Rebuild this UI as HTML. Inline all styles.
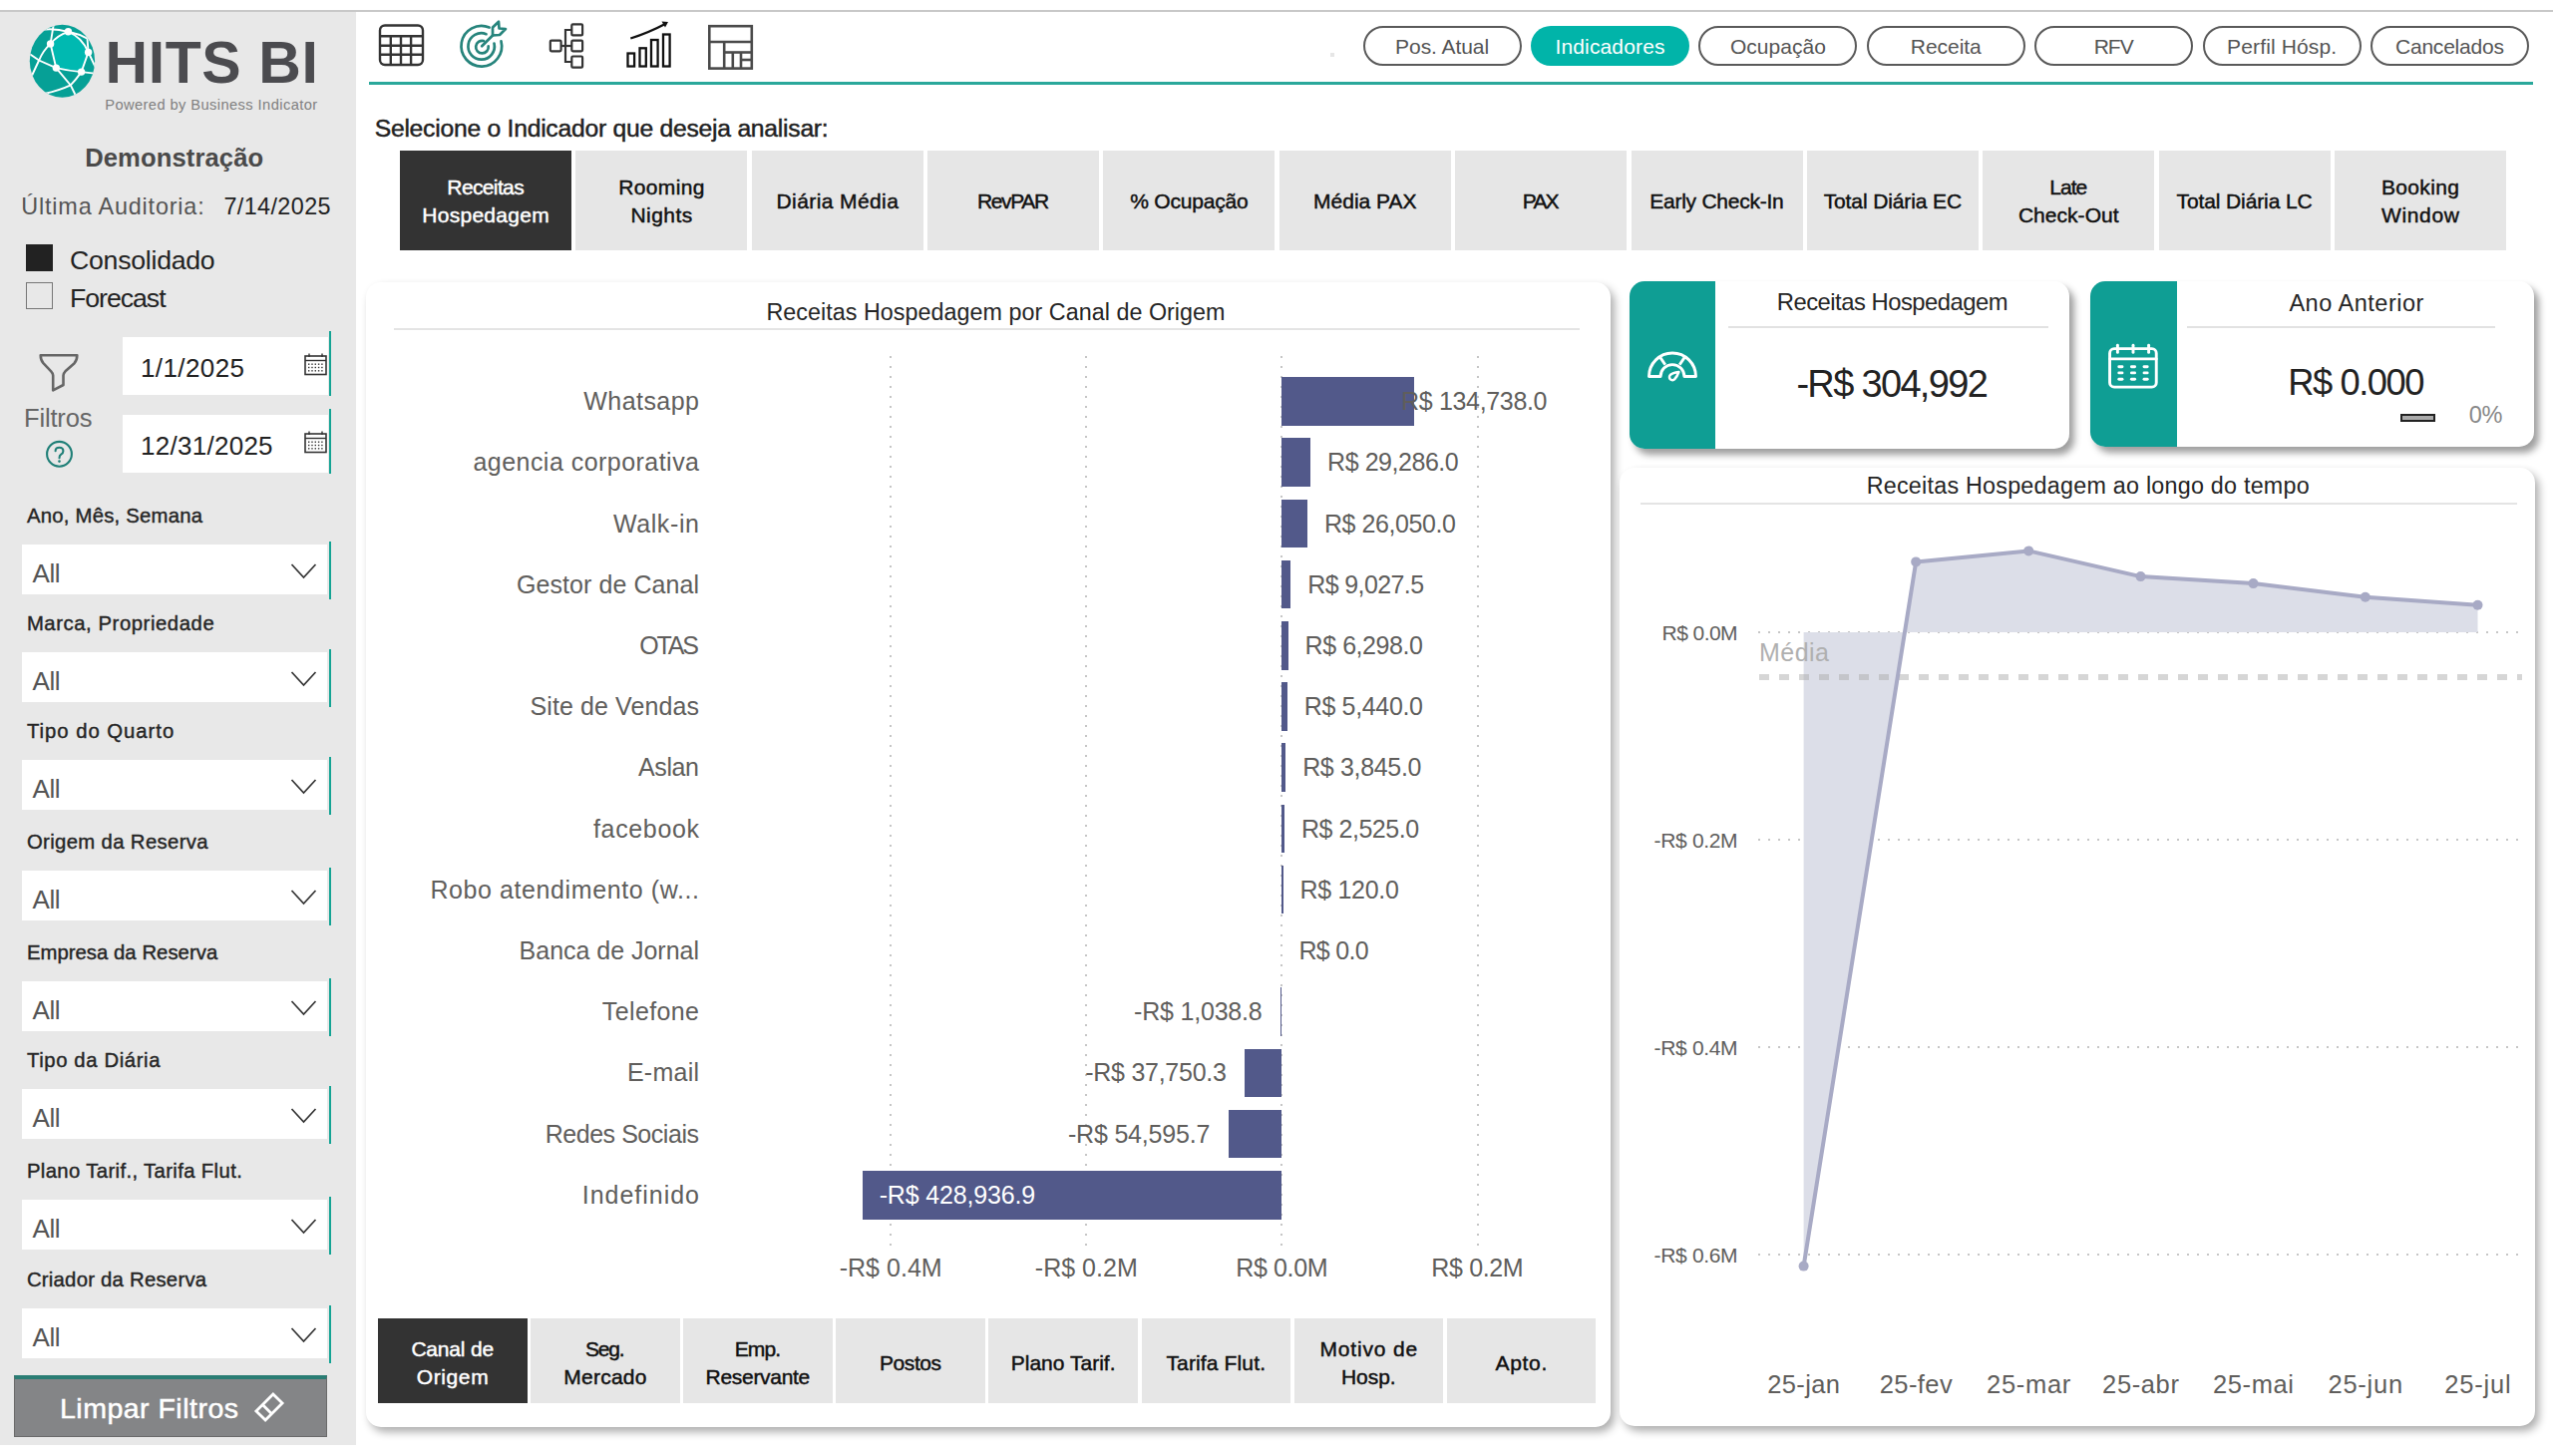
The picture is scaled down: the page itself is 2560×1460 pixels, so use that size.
<!DOCTYPE html>
<html><head><meta charset="utf-8"><style>
html,body{margin:0;padding:0;}
body{width:2560px;height:1460px;position:relative;overflow:hidden;background:#fff;font-family:"Liberation Sans", sans-serif;}
div{box-sizing:border-box;}
</style></head><body>
<div style="position:absolute;left:0.00px;top:10.00px;width:2560.00px;height:2.00px;background:#c8c8c8;"></div>
<div style="position:absolute;left:0.00px;top:12.00px;width:357.00px;height:1437.00px;background:#e8e8e8;"></div>
<svg style="position:absolute;left:29px;top:24px;overflow:visible;" width="68" height="75" viewBox="0 0 68 75">
<defs><clipPath id="gc"><ellipse cx="33.45" cy="37.25" rx="32.65" ry="36.45"/></clipPath></defs>
<ellipse cx="33.45" cy="37.25" rx="32.65" ry="36.45" fill="#06a096"/>
<g clip-path="url(#gc)">
<path d="M39.4,7.8 Q53,13 59.6,28.4 L52.6,48.1 Q40,47 27.3,44.1 L21.6,19.9 Q29,11 39.4,7.8 Z" fill="#00b9b1"/>
<g stroke="#fff" stroke-width="1.9" fill="none" stroke-linecap="round">
<path d="M39.4,7.8 Q53,13 59.6,28.4 L52.6,48.1 Q40,47 27.3,44.1 L21.6,19.9 Q29,11 39.4,7.8"/>
<path d="M12,5.8 Q26,4 39.4,7.8 Q50,10 58.5,14.6 L59.6,28.4 L67,44"/>
<path d="M25,-1 L21.6,19.9 Q14,27 10.1,36.5 L1,56"/>
<path d="M-1,29 Q5,33 10.1,36.5 Q18,40 27.3,44.1"/>
<path d="M52.6,48.1 L66,49.6"/>
<path d="M27.3,44.1 L41.8,61.4 L47,72"/>
<path d="M52.6,48.1 Q47,56 41.8,61.4 Q30,67 15,70"/>
</g>
<g fill="#fff"><circle cx="39.4" cy="7.8" r="3.7"/><circle cx="21.6" cy="19.9" r="3.7"/><circle cx="59.6" cy="28.4" r="3.7"/><circle cx="27.3" cy="44.1" r="3.7"/><circle cx="52.6" cy="48.1" r="3.7"/></g>
</g></svg>
<div style="position:absolute;top:33.96px;font-size:59px;line-height:59px;color:#4b4b4f;white-space:nowrap;font-weight:bold;letter-spacing:0.601px;left:105.50px;">HITS BI</div>
<div style="position:absolute;top:98.46px;font-size:14.7px;line-height:14.7px;color:#808080;white-space:nowrap;letter-spacing:0.405px;left:105.20px;">Powered by Business Indicator</div>
<div style="position:absolute;top:145.63px;font-size:25.6px;line-height:25.6px;color:#4a4a4a;white-space:nowrap;font-weight:bold;letter-spacing:0.109px;left:24.75px;width:300px;text-align:center;">Demonstração</div>
<div style="position:absolute;top:195.79px;font-size:23.4px;line-height:23.4px;color:#555;white-space:nowrap;letter-spacing:0.818px;left:21.30px;">Última Auditoria:</div>
<div style="position:absolute;top:195.79px;font-size:23.4px;line-height:23.4px;color:#222;white-space:nowrap;letter-spacing:0.392px;left:224.40px;">7/14/2025</div>
<div style="position:absolute;left:26.00px;top:245.00px;width:27.00px;height:27.00px;background:#222;"></div>
<div style="position:absolute;left:26.00px;top:283.00px;width:27.00px;height:27.00px;border:1.5px solid #777;"></div>
<div style="position:absolute;top:248.40px;font-size:26.7px;line-height:26.7px;color:#222;white-space:nowrap;letter-spacing:-0.268px;left:70.00px;">Consolidado</div>
<div style="position:absolute;top:286.00px;font-size:26.7px;line-height:26.7px;color:#222;white-space:nowrap;letter-spacing:-1.033px;left:70.00px;">Forecast</div>
<svg style="position:absolute;left:30px;top:345px;overflow:visible;" width="60" height="60" viewBox="0 0 60 60"><path d="M10.7,11.2 L47.3,11.2 Q47.3,16 44.6,19.2 L35.5,27.3 Q33.5,29.3 33.5,31.5 L33.5,41 L23.2,46.4 L23.2,31.5 Q23.2,29.3 21.2,27.3 L13.4,19.2 Q10.7,16 10.7,11.2 Z" fill="none" stroke="#666" stroke-width="2.6" stroke-linejoin="round"/></svg>
<div style="position:absolute;top:407.31px;font-size:25.5px;line-height:25.5px;color:#666;white-space:nowrap;letter-spacing:-0.170px;left:24.00px;">Filtros</div>
<svg style="position:absolute;left:45px;top:441px;overflow:visible;" width="30" height="30" viewBox="0 0 30 30"><circle cx="14.5" cy="14.3" r="12.4" fill="none" stroke="#1f7f77" stroke-width="2.1"/><path d="M10.6,11.2 Q10.6,7.8 14.5,7.8 Q18.4,7.8 18.4,11.3 Q18.4,13.4 16.2,14.7 Q14.5,15.8 14.5,18.2" fill="none" stroke="#1f7f77" stroke-width="2.1" stroke-linecap="round"/><circle cx="14.5" cy="21.6" r="1.3" fill="#1f7f77"/></svg>
<div style="position:absolute;left:123.00px;top:338.00px;width:206.00px;height:58.00px;background:#fff;"></div>
<div style="position:absolute;left:329.50px;top:332.00px;width:2.00px;height:65.00px;background:#14a394;"></div>
<div style="position:absolute;top:355.99px;font-size:26px;line-height:26px;color:#222;white-space:nowrap;letter-spacing:0.397px;left:141.00px;">1/1/2025</div>
<svg style="position:absolute;left:305px;top:354px;overflow:visible;" width="24" height="24" viewBox="0 0 24 24"><rect x="1" y="3" width="21" height="18.5" fill="none" stroke="#333" stroke-width="1.6"/><line x1="1" y1="7.5" x2="22" y2="7.5" stroke="#333" stroke-width="1.4"/><line x1="5" y1="0.5" x2="5" y2="4" stroke="#333" stroke-width="1.4"/><line x1="18" y1="0.5" x2="18" y2="4" stroke="#333" stroke-width="1.4"/><rect x="4.0" y="10.5" width="1.4" height="1.4" fill="#333"/><rect x="7.3" y="10.5" width="1.4" height="1.4" fill="#333"/><rect x="10.6" y="10.5" width="1.4" height="1.4" fill="#333"/><rect x="13.9" y="10.5" width="1.4" height="1.4" fill="#333"/><rect x="17.2" y="10.5" width="1.4" height="1.4" fill="#333"/><rect x="4.0" y="13.8" width="1.4" height="1.4" fill="#333"/><rect x="7.3" y="13.8" width="1.4" height="1.4" fill="#333"/><rect x="10.6" y="13.8" width="1.4" height="1.4" fill="#333"/><rect x="13.9" y="13.8" width="1.4" height="1.4" fill="#333"/><rect x="17.2" y="13.8" width="1.4" height="1.4" fill="#333"/><rect x="4.0" y="17.1" width="1.4" height="1.4" fill="#333"/><rect x="7.3" y="17.1" width="1.4" height="1.4" fill="#333"/><rect x="10.6" y="17.1" width="1.4" height="1.4" fill="#333"/><rect x="13.9" y="17.1" width="1.4" height="1.4" fill="#333"/><rect x="17.2" y="17.1" width="1.4" height="1.4" fill="#333"/></svg>
<div style="position:absolute;left:123.00px;top:416.00px;width:206.00px;height:58.00px;background:#fff;"></div>
<div style="position:absolute;left:329.50px;top:410.00px;width:2.00px;height:65.00px;background:#14a394;"></div>
<div style="position:absolute;top:433.99px;font-size:26px;line-height:26px;color:#222;white-space:nowrap;letter-spacing:0.273px;left:141.00px;">12/31/2025</div>
<svg style="position:absolute;left:305px;top:432px;overflow:visible;" width="24" height="24" viewBox="0 0 24 24"><rect x="1" y="3" width="21" height="18.5" fill="none" stroke="#333" stroke-width="1.6"/><line x1="1" y1="7.5" x2="22" y2="7.5" stroke="#333" stroke-width="1.4"/><line x1="5" y1="0.5" x2="5" y2="4" stroke="#333" stroke-width="1.4"/><line x1="18" y1="0.5" x2="18" y2="4" stroke="#333" stroke-width="1.4"/><rect x="4.0" y="10.5" width="1.4" height="1.4" fill="#333"/><rect x="7.3" y="10.5" width="1.4" height="1.4" fill="#333"/><rect x="10.6" y="10.5" width="1.4" height="1.4" fill="#333"/><rect x="13.9" y="10.5" width="1.4" height="1.4" fill="#333"/><rect x="17.2" y="10.5" width="1.4" height="1.4" fill="#333"/><rect x="4.0" y="13.8" width="1.4" height="1.4" fill="#333"/><rect x="7.3" y="13.8" width="1.4" height="1.4" fill="#333"/><rect x="10.6" y="13.8" width="1.4" height="1.4" fill="#333"/><rect x="13.9" y="13.8" width="1.4" height="1.4" fill="#333"/><rect x="17.2" y="13.8" width="1.4" height="1.4" fill="#333"/><rect x="4.0" y="17.1" width="1.4" height="1.4" fill="#333"/><rect x="7.3" y="17.1" width="1.4" height="1.4" fill="#333"/><rect x="10.6" y="17.1" width="1.4" height="1.4" fill="#333"/><rect x="13.9" y="17.1" width="1.4" height="1.4" fill="#333"/><rect x="17.2" y="17.1" width="1.4" height="1.4" fill="#333"/></svg>
<div style="position:absolute;top:506.62px;font-size:20.3px;line-height:20.3px;color:#252525;white-space:nowrap;-webkit-text-stroke:0.4px #252525;letter-spacing:0.248px;left:26.90px;">Ano, Mês, Semana</div>
<div style="position:absolute;left:22.20px;top:545.80px;width:306.30px;height:50.00px;background:#fff;"></div>
<div style="position:absolute;left:329.80px;top:542.80px;width:2.00px;height:58.00px;background:#14a394;"></div>
<div style="position:absolute;top:562.19px;font-size:26px;line-height:26px;color:#555;white-space:nowrap;letter-spacing:-0.453px;left:32.60px;">All</div>
<svg style="position:absolute;left:291px;top:563.8px;overflow:visible;" width="28" height="18" viewBox="0 0 28 18"><polyline points="1.5,2 13.5,15 25.5,2" fill="none" stroke="#333" stroke-width="1.7"/></svg>
<div style="position:absolute;top:614.72px;font-size:20.3px;line-height:20.3px;color:#252525;white-space:nowrap;-webkit-text-stroke:0.4px #252525;letter-spacing:0.569px;left:26.90px;">Marca, Propriedade</div>
<div style="position:absolute;left:22.20px;top:653.90px;width:306.30px;height:50.00px;background:#fff;"></div>
<div style="position:absolute;left:329.80px;top:650.90px;width:2.00px;height:58.00px;background:#14a394;"></div>
<div style="position:absolute;top:670.29px;font-size:26px;line-height:26px;color:#555;white-space:nowrap;letter-spacing:-0.453px;left:32.60px;">All</div>
<svg style="position:absolute;left:291px;top:671.9px;overflow:visible;" width="28" height="18" viewBox="0 0 28 18"><polyline points="1.5,2 13.5,15 25.5,2" fill="none" stroke="#333" stroke-width="1.7"/></svg>
<div style="position:absolute;top:722.82px;font-size:20.3px;line-height:20.3px;color:#252525;white-space:nowrap;-webkit-text-stroke:0.4px #252525;letter-spacing:0.981px;left:26.90px;">Tipo do Quarto</div>
<div style="position:absolute;left:22.20px;top:762.00px;width:306.30px;height:50.00px;background:#fff;"></div>
<div style="position:absolute;left:329.80px;top:759.00px;width:2.00px;height:58.00px;background:#14a394;"></div>
<div style="position:absolute;top:778.39px;font-size:26px;line-height:26px;color:#555;white-space:nowrap;letter-spacing:-0.453px;left:32.60px;">All</div>
<svg style="position:absolute;left:291px;top:780px;overflow:visible;" width="28" height="18" viewBox="0 0 28 18"><polyline points="1.5,2 13.5,15 25.5,2" fill="none" stroke="#333" stroke-width="1.7"/></svg>
<div style="position:absolute;top:833.82px;font-size:20.3px;line-height:20.3px;color:#252525;white-space:nowrap;-webkit-text-stroke:0.4px #252525;letter-spacing:0.366px;left:26.90px;">Origem da Reserva</div>
<div style="position:absolute;left:22.20px;top:873.00px;width:306.30px;height:50.00px;background:#fff;"></div>
<div style="position:absolute;left:329.80px;top:870.00px;width:2.00px;height:58.00px;background:#14a394;"></div>
<div style="position:absolute;top:889.39px;font-size:26px;line-height:26px;color:#555;white-space:nowrap;letter-spacing:-0.453px;left:32.60px;">All</div>
<svg style="position:absolute;left:291px;top:891px;overflow:visible;" width="28" height="18" viewBox="0 0 28 18"><polyline points="1.5,2 13.5,15 25.5,2" fill="none" stroke="#333" stroke-width="1.7"/></svg>
<div style="position:absolute;top:944.72px;font-size:20.3px;line-height:20.3px;color:#252525;white-space:nowrap;-webkit-text-stroke:0.4px #252525;letter-spacing:0.046px;left:26.90px;">Empresa da Reserva</div>
<div style="position:absolute;left:22.20px;top:983.90px;width:306.30px;height:50.00px;background:#fff;"></div>
<div style="position:absolute;left:329.80px;top:980.90px;width:2.00px;height:58.00px;background:#14a394;"></div>
<div style="position:absolute;top:1000.29px;font-size:26px;line-height:26px;color:#555;white-space:nowrap;letter-spacing:-0.453px;left:32.60px;">All</div>
<svg style="position:absolute;left:291px;top:1001.9px;overflow:visible;" width="28" height="18" viewBox="0 0 28 18"><polyline points="1.5,2 13.5,15 25.5,2" fill="none" stroke="#333" stroke-width="1.7"/></svg>
<div style="position:absolute;top:1052.52px;font-size:20.3px;line-height:20.3px;color:#252525;white-space:nowrap;-webkit-text-stroke:0.4px #252525;letter-spacing:0.623px;left:26.90px;">Tipo da Diária</div>
<div style="position:absolute;left:22.20px;top:1091.70px;width:306.30px;height:50.00px;background:#fff;"></div>
<div style="position:absolute;left:329.80px;top:1088.70px;width:2.00px;height:58.00px;background:#14a394;"></div>
<div style="position:absolute;top:1108.09px;font-size:26px;line-height:26px;color:#555;white-space:nowrap;letter-spacing:-0.453px;left:32.60px;">All</div>
<svg style="position:absolute;left:291px;top:1109.7px;overflow:visible;" width="28" height="18" viewBox="0 0 28 18"><polyline points="1.5,2 13.5,15 25.5,2" fill="none" stroke="#333" stroke-width="1.7"/></svg>
<div style="position:absolute;top:1163.52px;font-size:20.3px;line-height:20.3px;color:#252525;white-space:nowrap;-webkit-text-stroke:0.4px #252525;letter-spacing:0.369px;left:26.90px;">Plano Tarif., Tarifa Flut.</div>
<div style="position:absolute;left:22.20px;top:1202.70px;width:306.30px;height:50.00px;background:#fff;"></div>
<div style="position:absolute;left:329.80px;top:1199.70px;width:2.00px;height:58.00px;background:#14a394;"></div>
<div style="position:absolute;top:1219.09px;font-size:26px;line-height:26px;color:#555;white-space:nowrap;letter-spacing:-0.453px;left:32.60px;">All</div>
<svg style="position:absolute;left:291px;top:1220.7px;overflow:visible;" width="28" height="18" viewBox="0 0 28 18"><polyline points="1.5,2 13.5,15 25.5,2" fill="none" stroke="#333" stroke-width="1.7"/></svg>
<div style="position:absolute;top:1272.72px;font-size:20.3px;line-height:20.3px;color:#252525;white-space:nowrap;-webkit-text-stroke:0.4px #252525;letter-spacing:0.255px;left:26.90px;">Criador da Reserva</div>
<div style="position:absolute;left:22.20px;top:1311.90px;width:306.30px;height:50.00px;background:#fff;"></div>
<div style="position:absolute;left:329.80px;top:1308.90px;width:2.00px;height:58.00px;background:#14a394;"></div>
<div style="position:absolute;top:1328.29px;font-size:26px;line-height:26px;color:#555;white-space:nowrap;letter-spacing:-0.453px;left:32.60px;">All</div>
<svg style="position:absolute;left:291px;top:1329.9px;overflow:visible;" width="28" height="18" viewBox="0 0 28 18"><polyline points="1.5,2 13.5,15 25.5,2" fill="none" stroke="#333" stroke-width="1.7"/></svg>
<div style="position:absolute;left:14.40px;top:1379.00px;width:313.30px;height:62.00px;background:#848587;border:1px solid #6a6a6a;border-top:4px solid #2a7d74;"></div>
<div style="position:absolute;top:1397.87px;font-size:28.5px;line-height:28.5px;color:#fff;white-space:nowrap;-webkit-text-stroke:0.5px #fff;letter-spacing:0.490px;left:60.00px;">Limpar Filtros</div>
<svg style="position:absolute;left:254px;top:1394px;overflow:visible;" width="34" height="34" viewBox="0 0 34 34"><g transform="rotate(-45 16 17)"><rect x="4" y="10.5" width="24" height="13" fill="none" stroke="#fff" stroke-width="2.8"/><line x1="13" y1="10.5" x2="13" y2="23.5" stroke="#fff" stroke-width="2.8"/></g></svg>
<svg style="position:absolute;left:378px;top:23px;overflow:visible;" width="48" height="44" viewBox="0 0 48 44"><g fill="none" stroke="#333" stroke-width="2.4">
<rect x="3" y="2.5" width="43" height="39.5" rx="5"/>
<line x1="3" y1="13.3" x2="46" y2="13.3"/><line x1="3" y1="22.7" x2="46" y2="22.7"/><line x1="3" y1="31.8" x2="46" y2="31.8"/>
<line x1="13.8" y1="13.3" x2="13.8" y2="42"/><line x1="24" y1="13.3" x2="24" y2="42"/><line x1="34.1" y1="13.3" x2="34.1" y2="42"/>
</g></svg>
<svg style="position:absolute;left:455px;top:18px;overflow:visible;" width="56" height="56" viewBox="0 0 56 56"><g fill="none" stroke="#26847c" stroke-width="2.7" stroke-linecap="round">
<path d="M35.6,9.5 A20.3,20.3 0 1 0 47.5,23.3"/>
<path d="M32.5,16.2 A13.2,13.2 0 1 0 40.5,25.5"/>
<path d="M30,23 A6.3,6.3 0 1 0 34.7,28.3"/>
<line x1="28.2" y1="28.3" x2="39" y2="17.5"/>
<path d="M39,17.5 L39,9.5 L45,3.8 L45.5,10.5 L52,11 L46,17 Z" stroke-linejoin="round"/>
</g></svg>
<svg style="position:absolute;left:548px;top:20px;overflow:visible;" width="40" height="50" viewBox="0 0 40 50"><g fill="none" stroke="#333" stroke-width="2.2">
<rect x="3.8" y="20.6" width="10.8" height="10.7" rx="1.2"/>
<rect x="25.3" y="4.4" width="10.8" height="11" rx="1.2"/>
<rect x="25.3" y="20.6" width="10.8" height="10.7" rx="1.2"/>
<rect x="25.3" y="36.5" width="10.8" height="11.1" rx="1.2"/>
<polyline points="25.3,10 19,10 19,42 25.3,42"/>
<line x1="14.6" y1="26" x2="25.3" y2="26"/>
</g></svg>
<svg style="position:absolute;left:620px;top:18px;overflow:visible;" width="58" height="52" viewBox="0 0 58 52"><g fill="none" stroke="#111" stroke-width="2.3">
<rect x="9.5" y="35.5" width="6.6" height="13"/>
<rect x="21.5" y="30.3" width="6.3" height="18.2"/>
<rect x="33" y="22" width="6.6" height="26.5"/>
<rect x="45" y="16.5" width="6.6" height="32"/>
<path d="M12.3,20.5 Q30,15 47,6"/>
</g><path d="M43.5,3.5 L50,4 L47,9.5 Z" fill="#111"/></svg>
<svg style="position:absolute;left:708px;top:23px;overflow:visible;" width="48" height="48" viewBox="0 0 48 48"><g fill="none" stroke="#4a4a4a" stroke-width="2.6">
<rect x="3.3" y="3.2" width="42.5" height="42.4"/>
<line x1="3.3" y1="19" x2="45.8" y2="19"/>
<line x1="18.2" y1="19" x2="18.2" y2="45.6"/>
<line x1="18.2" y1="29.5" x2="45.8" y2="29.5"/>
<line x1="26.8" y1="29.5" x2="26.8" y2="45.6"/>
<line x1="35" y1="29.5" x2="35" y2="45.6"/>
<line x1="35" y1="37" x2="45.8" y2="37"/>
</g></svg>
<div style="position:absolute;left:1366.60px;top:26.00px;width:159.00px;height:39.50px;border:2px solid #5a5a5a;border-radius:20px;"></div>
<div style="position:absolute;top:35.92px;font-size:21px;line-height:21px;color:#555;white-space:nowrap;letter-spacing:-0.062px;left:1346.07px;width:200px;text-align:center;">Pos. Atual</div>
<div style="position:absolute;left:1535.00px;top:26.00px;width:159.00px;height:39.50px;background:#01b4a9;border-radius:20px;"></div>
<div style="position:absolute;top:35.92px;font-size:21px;line-height:21px;color:#fff;white-space:nowrap;letter-spacing:0.142px;left:1514.57px;width:200px;text-align:center;">Indicadores</div>
<div style="position:absolute;left:1703.40px;top:26.00px;width:159.00px;height:39.50px;border:2px solid #5a5a5a;border-radius:20px;"></div>
<div style="position:absolute;top:35.92px;font-size:21px;line-height:21px;color:#555;white-space:nowrap;letter-spacing:0.038px;left:1682.92px;width:200px;text-align:center;">Ocupação</div>
<div style="position:absolute;left:1871.80px;top:26.00px;width:159.00px;height:39.50px;border:2px solid #5a5a5a;border-radius:20px;"></div>
<div style="position:absolute;top:35.92px;font-size:21px;line-height:21px;color:#555;white-space:nowrap;letter-spacing:-0.034px;left:1851.28px;width:200px;text-align:center;">Receita</div>
<div style="position:absolute;left:2040.20px;top:26.00px;width:159.00px;height:39.50px;border:2px solid #5a5a5a;border-radius:20px;"></div>
<div style="position:absolute;top:35.92px;font-size:21px;line-height:21px;color:#555;white-space:nowrap;letter-spacing:-1.000px;left:2019.20px;width:200px;text-align:center;">RFV</div>
<div style="position:absolute;left:2208.60px;top:26.00px;width:159.00px;height:39.50px;border:2px solid #5a5a5a;border-radius:20px;"></div>
<div style="position:absolute;top:35.92px;font-size:21px;line-height:21px;color:#555;white-space:nowrap;letter-spacing:0.132px;left:2188.17px;width:200px;text-align:center;">Perfil Hósp.</div>
<div style="position:absolute;left:2377.00px;top:26.00px;width:159.00px;height:39.50px;border:2px solid #5a5a5a;border-radius:20px;"></div>
<div style="position:absolute;top:35.92px;font-size:21px;line-height:21px;color:#555;white-space:nowrap;letter-spacing:-0.212px;left:2356.39px;width:200px;text-align:center;">Cancelados</div>
<div style="position:absolute;left:370.00px;top:82.00px;width:2170.00px;height:2.50px;background:#2aa89b;"></div>
<div style="position:absolute;top:116.59px;font-size:24.7px;line-height:24.7px;color:#222;white-space:nowrap;-webkit-text-stroke:0.45px #222;letter-spacing:-0.250px;left:375.70px;">Selecione o Indicador que deseja analisar:</div>
<div style="position:absolute;left:401.00px;top:151.00px;width:172.00px;height:100.00px;background:#333333;"></div>
<div style="position:absolute;top:177.43px;font-size:21px;line-height:21px;color:#fff;white-space:nowrap;-webkit-text-stroke:0.45px #fff;letter-spacing:-0.629px;left:380.69px;width:212px;text-align:center;">Receitas</div>
<div style="position:absolute;top:205.13px;font-size:21px;line-height:21px;color:#fff;white-space:nowrap;-webkit-text-stroke:0.45px #fff;letter-spacing:0.264px;left:381.13px;width:212px;text-align:center;">Hospedagem</div>
<div style="position:absolute;left:577.36px;top:151.00px;width:172.00px;height:100.00px;background:#e6e6e6;"></div>
<div style="position:absolute;top:177.43px;font-size:21px;line-height:21px;color:#111;white-space:nowrap;-webkit-text-stroke:0.45px #111;letter-spacing:0.326px;left:557.52px;width:212px;text-align:center;">Rooming</div>
<div style="position:absolute;top:205.13px;font-size:21px;line-height:21px;color:#111;white-space:nowrap;-webkit-text-stroke:0.45px #111;letter-spacing:0.454px;left:557.59px;width:212px;text-align:center;">Nights</div>
<div style="position:absolute;left:753.72px;top:151.00px;width:172.00px;height:100.00px;background:#e6e6e6;"></div>
<div style="position:absolute;top:191.28px;font-size:21px;line-height:21px;color:#111;white-space:nowrap;-webkit-text-stroke:0.45px #111;letter-spacing:0.401px;left:733.92px;width:212px;text-align:center;">Diária Média</div>
<div style="position:absolute;left:930.08px;top:151.00px;width:172.00px;height:100.00px;background:#e6e6e6;"></div>
<div style="position:absolute;top:191.28px;font-size:21px;line-height:21px;color:#111;white-space:nowrap;-webkit-text-stroke:0.45px #111;letter-spacing:-1.354px;left:909.40px;width:212px;text-align:center;">RevPAR</div>
<div style="position:absolute;left:1106.44px;top:151.00px;width:172.00px;height:100.00px;background:#e6e6e6;"></div>
<div style="position:absolute;top:191.28px;font-size:21px;line-height:21px;color:#111;white-space:nowrap;-webkit-text-stroke:0.45px #111;letter-spacing:-0.206px;left:1086.34px;width:212px;text-align:center;">% Ocupação</div>
<div style="position:absolute;left:1282.80px;top:151.00px;width:172.00px;height:100.00px;background:#e6e6e6;"></div>
<div style="position:absolute;top:191.28px;font-size:21px;line-height:21px;color:#111;white-space:nowrap;-webkit-text-stroke:0.45px #111;letter-spacing:0.000px;left:1262.80px;width:212px;text-align:center;">Média PAX</div>
<div style="position:absolute;left:1459.16px;top:151.00px;width:172.00px;height:100.00px;background:#e6e6e6;"></div>
<div style="position:absolute;top:191.28px;font-size:21px;line-height:21px;color:#111;white-space:nowrap;-webkit-text-stroke:0.45px #111;letter-spacing:-1.884px;left:1438.22px;width:212px;text-align:center;">PAX</div>
<div style="position:absolute;left:1635.52px;top:151.00px;width:172.00px;height:100.00px;background:#e6e6e6;"></div>
<div style="position:absolute;top:191.28px;font-size:21px;line-height:21px;color:#111;white-space:nowrap;-webkit-text-stroke:0.45px #111;letter-spacing:-0.248px;left:1615.40px;width:212px;text-align:center;">Early Check-In</div>
<div style="position:absolute;left:1811.88px;top:151.00px;width:172.00px;height:100.00px;background:#e6e6e6;"></div>
<div style="position:absolute;top:191.28px;font-size:21px;line-height:21px;color:#111;white-space:nowrap;-webkit-text-stroke:0.45px #111;letter-spacing:-0.119px;left:1791.82px;width:212px;text-align:center;">Total Diária EC</div>
<div style="position:absolute;left:1988.24px;top:151.00px;width:172.00px;height:100.00px;background:#e6e6e6;"></div>
<div style="position:absolute;top:177.43px;font-size:21px;line-height:21px;color:#111;white-space:nowrap;-webkit-text-stroke:0.45px #111;letter-spacing:-0.958px;left:1967.76px;width:212px;text-align:center;">Late</div>
<div style="position:absolute;top:205.13px;font-size:21px;line-height:21px;color:#111;white-space:nowrap;-webkit-text-stroke:0.45px #111;letter-spacing:0.041px;left:1968.26px;width:212px;text-align:center;">Check-Out</div>
<div style="position:absolute;left:2164.60px;top:151.00px;width:172.00px;height:100.00px;background:#e6e6e6;"></div>
<div style="position:absolute;top:191.28px;font-size:21px;line-height:21px;color:#111;white-space:nowrap;-webkit-text-stroke:0.45px #111;letter-spacing:-0.110px;left:2144.55px;width:212px;text-align:center;">Total Diária LC</div>
<div style="position:absolute;left:2340.96px;top:151.00px;width:172.00px;height:100.00px;background:#e6e6e6;"></div>
<div style="position:absolute;top:177.43px;font-size:21px;line-height:21px;color:#111;white-space:nowrap;-webkit-text-stroke:0.45px #111;letter-spacing:0.352px;left:2321.14px;width:212px;text-align:center;">Booking</div>
<div style="position:absolute;top:205.13px;font-size:21px;line-height:21px;color:#111;white-space:nowrap;-webkit-text-stroke:0.45px #111;letter-spacing:0.659px;left:2321.29px;width:212px;text-align:center;">Window</div>
<div style="position:absolute;left:367.00px;top:283.00px;width:1248.00px;height:1148.00px;background:#fff;border-radius:15px;box-shadow:4px 5px 9px rgba(0,0,0,0.32);"></div>
<div style="position:absolute;top:302.28px;font-size:23.3px;line-height:23.3px;color:#252525;white-space:nowrap;letter-spacing:0.042px;left:648.52px;width:700px;text-align:center;">Receitas Hospedagem por Canal de Origem</div>
<div style="position:absolute;left:395.00px;top:329.00px;width:1189.00px;height:2.00px;background:#e4e4e4;"></div>
<svg style="position:absolute;left:892.2px;top:356.7px;overflow:visible;" width="2" height="893" viewBox="0 0 2 893"><line x1="1" y1="0" x2="1" y2="893" stroke="#c6c6c6" stroke-width="2" stroke-dasharray="2 8"/></svg>
<svg style="position:absolute;left:1088.3px;top:356.7px;overflow:visible;" width="2" height="893" viewBox="0 0 2 893"><line x1="1" y1="0" x2="1" y2="893" stroke="#c6c6c6" stroke-width="2" stroke-dasharray="2 8"/></svg>
<svg style="position:absolute;left:1284.4px;top:356.7px;overflow:visible;" width="2" height="893" viewBox="0 0 2 893"><line x1="1" y1="0" x2="1" y2="893" stroke="#c6c6c6" stroke-width="2" stroke-dasharray="2 8"/></svg>
<svg style="position:absolute;left:1480.5px;top:356.7px;overflow:visible;" width="2" height="893" viewBox="0 0 2 893"><line x1="1" y1="0" x2="1" y2="893" stroke="#c6c6c6" stroke-width="2" stroke-dasharray="2 8"/></svg>
<div style="position:absolute;top:390.14px;font-size:25px;line-height:25px;color:#605e5c;white-space:nowrap;letter-spacing:0.448px;left:301.45px;width:400px;text-align:right;">Whatsapp</div>
<div style="position:absolute;left:1285.40px;top:378.20px;width:132.11px;height:48.60px;background:#52598a;"></div>
<div style="position:absolute;top:390.14px;font-size:25px;line-height:25px;color:#605e5c;white-space:nowrap;letter-spacing:-0.330px;left:1405.00px;">R$ 134,738.0</div>
<div style="position:absolute;top:451.35px;font-size:25px;line-height:25px;color:#605e5c;white-space:nowrap;letter-spacing:0.466px;left:301.47px;width:400px;text-align:right;">agencia corporativa</div>
<div style="position:absolute;left:1285.40px;top:439.41px;width:28.71px;height:48.60px;background:#52598a;"></div>
<div style="position:absolute;top:451.35px;font-size:25px;line-height:25px;color:#605e5c;white-space:nowrap;letter-spacing:-0.462px;left:1331.11px;">R$ 29,286.0</div>
<div style="position:absolute;top:512.56px;font-size:25px;line-height:25px;color:#605e5c;white-space:nowrap;letter-spacing:0.613px;left:301.61px;width:400px;text-align:right;">Walk-in</div>
<div style="position:absolute;left:1285.40px;top:500.62px;width:25.54px;height:48.60px;background:#52598a;"></div>
<div style="position:absolute;top:512.56px;font-size:25px;line-height:25px;color:#605e5c;white-space:nowrap;letter-spacing:-0.422px;left:1327.94px;">R$ 26,050.0</div>
<div style="position:absolute;top:573.77px;font-size:25px;line-height:25px;color:#605e5c;white-space:nowrap;letter-spacing:0.075px;left:301.08px;width:400px;text-align:right;">Gestor de Canal</div>
<div style="position:absolute;left:1285.40px;top:561.83px;width:8.85px;height:48.60px;background:#52598a;"></div>
<div style="position:absolute;top:573.77px;font-size:25px;line-height:25px;color:#605e5c;white-space:nowrap;letter-spacing:-0.614px;left:1311.25px;">R$ 9,027.5</div>
<div style="position:absolute;top:634.98px;font-size:25px;line-height:25px;color:#605e5c;white-space:nowrap;letter-spacing:-2.140px;left:298.86px;width:400px;text-align:right;">OTAS</div>
<div style="position:absolute;left:1285.40px;top:623.04px;width:6.18px;height:48.60px;background:#52598a;"></div>
<div style="position:absolute;top:634.98px;font-size:25px;line-height:25px;color:#605e5c;white-space:nowrap;letter-spacing:-0.448px;left:1308.58px;">R$ 6,298.0</div>
<div style="position:absolute;top:696.19px;font-size:25px;line-height:25px;color:#605e5c;white-space:nowrap;letter-spacing:0.100px;left:301.10px;width:400px;text-align:right;">Site de Vendas</div>
<div style="position:absolute;left:1285.40px;top:684.25px;width:5.33px;height:48.60px;background:#52598a;"></div>
<div style="position:absolute;top:696.19px;font-size:25px;line-height:25px;color:#605e5c;white-space:nowrap;letter-spacing:-0.336px;left:1307.73px;">R$ 5,440.0</div>
<div style="position:absolute;top:757.40px;font-size:25px;line-height:25px;color:#605e5c;white-space:nowrap;letter-spacing:-0.387px;left:300.61px;width:400px;text-align:right;">Aslan</div>
<div style="position:absolute;left:1285.40px;top:745.46px;width:3.77px;height:48.60px;background:#52598a;"></div>
<div style="position:absolute;top:757.40px;font-size:25px;line-height:25px;color:#605e5c;white-space:nowrap;letter-spacing:-0.336px;left:1306.17px;">R$ 3,845.0</div>
<div style="position:absolute;top:818.61px;font-size:25px;line-height:25px;color:#605e5c;white-space:nowrap;letter-spacing:0.647px;left:301.65px;width:400px;text-align:right;">facebook</div>
<div style="position:absolute;left:1285.40px;top:806.67px;width:2.48px;height:48.60px;background:#52598a;"></div>
<div style="position:absolute;top:818.61px;font-size:25px;line-height:25px;color:#605e5c;white-space:nowrap;letter-spacing:-0.448px;left:1304.88px;">R$ 2,525.0</div>
<div style="position:absolute;top:879.82px;font-size:25px;line-height:25px;color:#605e5c;white-space:nowrap;letter-spacing:0.596px;left:301.60px;width:400px;text-align:right;">Robo atendimento (w...</div>
<div style="position:absolute;left:1285.40px;top:867.88px;width:1.20px;height:48.60px;background:#52598a;"></div>
<div style="position:absolute;top:879.82px;font-size:25px;line-height:25px;color:#605e5c;white-space:nowrap;letter-spacing:-0.324px;left:1303.60px;">R$ 120.0</div>
<div style="position:absolute;top:941.03px;font-size:25px;line-height:25px;color:#605e5c;white-space:nowrap;letter-spacing:-0.021px;left:300.98px;width:400px;text-align:right;">Banca de Jornal</div>
<div style="position:absolute;top:941.03px;font-size:25px;line-height:25px;color:#605e5c;white-space:nowrap;letter-spacing:-0.694px;left:1302.40px;">R$ 0.0</div>
<div style="position:absolute;top:1002.24px;font-size:25px;line-height:25px;color:#605e5c;white-space:nowrap;letter-spacing:0.381px;left:301.38px;width:400px;text-align:right;">Telefone</div>
<div style="position:absolute;left:1284.20px;top:990.30px;width:1.20px;height:48.60px;background:#52598a;"></div>
<div style="position:absolute;top:1002.24px;font-size:25px;line-height:25px;color:#605e5c;white-space:nowrap;letter-spacing:-0.204px;left:965.50px;width:300px;text-align:right;">-R$ 1,038.8</div>
<div style="position:absolute;top:1063.45px;font-size:25px;line-height:25px;color:#605e5c;white-space:nowrap;letter-spacing:0.251px;left:301.25px;width:400px;text-align:right;">E-mail</div>
<div style="position:absolute;left:1248.39px;top:1051.51px;width:37.01px;height:48.60px;background:#52598a;"></div>
<div style="position:absolute;top:1063.45px;font-size:25px;line-height:25px;color:#605e5c;white-space:nowrap;letter-spacing:-0.259px;left:929.63px;width:300px;text-align:right;">-R$ 37,750.3</div>
<div style="position:absolute;top:1124.66px;font-size:25px;line-height:25px;color:#605e5c;white-space:nowrap;letter-spacing:-0.459px;left:300.54px;width:400px;text-align:right;">Redes Sociais</div>
<div style="position:absolute;left:1231.87px;top:1112.72px;width:53.53px;height:48.60px;background:#52598a;"></div>
<div style="position:absolute;top:1124.66px;font-size:25px;line-height:25px;color:#605e5c;white-space:nowrap;letter-spacing:-0.195px;left:913.17px;width:300px;text-align:right;">-R$ 54,595.7</div>
<div style="position:absolute;top:1185.87px;font-size:25px;line-height:25px;color:#605e5c;white-space:nowrap;letter-spacing:0.974px;left:301.97px;width:400px;text-align:right;">Indefinido</div>
<div style="position:absolute;left:864.83px;top:1173.93px;width:420.57px;height:48.60px;background:#52598a;"></div>
<div style="position:absolute;top:1185.87px;font-size:25px;line-height:25px;color:#fff;white-space:nowrap;letter-spacing:-0.154px;left:881.63px;">-R$ 428,936.9</div>
<div style="position:absolute;top:1258.84px;font-size:25px;line-height:25px;color:#605e5c;white-space:nowrap;letter-spacing:0.027px;left:793.21px;width:200px;text-align:center;">-R$ 0.4M</div>
<div style="position:absolute;top:1258.84px;font-size:25px;line-height:25px;color:#605e5c;white-space:nowrap;letter-spacing:0.027px;left:989.31px;width:200px;text-align:center;">-R$ 0.2M</div>
<div style="position:absolute;top:1258.84px;font-size:25px;line-height:25px;color:#605e5c;white-space:nowrap;letter-spacing:-0.364px;left:1185.22px;width:200px;text-align:center;">R$ 0.0M</div>
<div style="position:absolute;top:1258.84px;font-size:25px;line-height:25px;color:#605e5c;white-space:nowrap;letter-spacing:-0.364px;left:1381.32px;width:200px;text-align:center;">R$ 0.2M</div>
<div style="position:absolute;left:379.00px;top:1322.20px;width:149.50px;height:85.20px;background:#333333;"></div>
<div style="position:absolute;top:1342.28px;font-size:21px;line-height:21px;color:#fff;white-space:nowrap;-webkit-text-stroke:0.45px #fff;letter-spacing:-0.195px;left:358.90px;width:189.5px;text-align:center;">Canal de</div>
<div style="position:absolute;top:1369.88px;font-size:21px;line-height:21px;color:#fff;white-space:nowrap;-webkit-text-stroke:0.45px #fff;letter-spacing:0.588px;left:359.29px;width:189.5px;text-align:center;">Origem</div>
<div style="position:absolute;left:532.10px;top:1322.20px;width:149.50px;height:85.20px;background:#e6e6e6;"></div>
<div style="position:absolute;top:1342.28px;font-size:21px;line-height:21px;color:#111;white-space:nowrap;-webkit-text-stroke:0.45px #111;letter-spacing:-1.168px;left:511.52px;width:189.5px;text-align:center;">Seg.</div>
<div style="position:absolute;top:1369.88px;font-size:21px;line-height:21px;color:#111;white-space:nowrap;-webkit-text-stroke:0.45px #111;letter-spacing:0.266px;left:512.23px;width:189.5px;text-align:center;">Mercado</div>
<div style="position:absolute;left:685.20px;top:1322.20px;width:149.50px;height:85.20px;background:#e6e6e6;"></div>
<div style="position:absolute;top:1342.28px;font-size:21px;line-height:21px;color:#111;white-space:nowrap;-webkit-text-stroke:0.45px #111;letter-spacing:-0.872px;left:664.76px;width:189.5px;text-align:center;">Emp.</div>
<div style="position:absolute;top:1369.88px;font-size:21px;line-height:21px;color:#111;white-space:nowrap;-webkit-text-stroke:0.45px #111;letter-spacing:-0.299px;left:665.05px;width:189.5px;text-align:center;">Reservante</div>
<div style="position:absolute;left:838.30px;top:1322.20px;width:149.50px;height:85.20px;background:#e6e6e6;"></div>
<div style="position:absolute;top:1356.08px;font-size:21px;line-height:21px;color:#111;white-space:nowrap;-webkit-text-stroke:0.45px #111;letter-spacing:-0.441px;left:818.08px;width:189.5px;text-align:center;">Postos</div>
<div style="position:absolute;left:991.40px;top:1322.20px;width:149.50px;height:85.20px;background:#e6e6e6;"></div>
<div style="position:absolute;top:1356.08px;font-size:21px;line-height:21px;color:#111;white-space:nowrap;-webkit-text-stroke:0.45px #111;letter-spacing:0.012px;left:971.41px;width:189.5px;text-align:center;">Plano Tarif.</div>
<div style="position:absolute;left:1144.50px;top:1322.20px;width:149.50px;height:85.20px;background:#e6e6e6;"></div>
<div style="position:absolute;top:1356.08px;font-size:21px;line-height:21px;color:#111;white-space:nowrap;-webkit-text-stroke:0.45px #111;letter-spacing:0.134px;left:1124.57px;width:189.5px;text-align:center;">Tarifa Flut.</div>
<div style="position:absolute;left:1297.60px;top:1322.20px;width:149.50px;height:85.20px;background:#e6e6e6;"></div>
<div style="position:absolute;top:1342.28px;font-size:21px;line-height:21px;color:#111;white-space:nowrap;-webkit-text-stroke:0.45px #111;letter-spacing:0.857px;left:1278.03px;width:189.5px;text-align:center;">Motivo de</div>
<div style="position:absolute;top:1369.88px;font-size:21px;line-height:21px;color:#111;white-space:nowrap;-webkit-text-stroke:0.45px #111;letter-spacing:-0.040px;left:1277.58px;width:189.5px;text-align:center;">Hosp.</div>
<div style="position:absolute;left:1450.70px;top:1322.20px;width:149.50px;height:85.20px;background:#e6e6e6;"></div>
<div style="position:absolute;top:1356.08px;font-size:21px;line-height:21px;color:#111;white-space:nowrap;-webkit-text-stroke:0.45px #111;letter-spacing:0.663px;left:1431.03px;width:189.5px;text-align:center;">Apto.</div>
<div style="position:absolute;left:1634.00px;top:282.00px;width:441.00px;height:167.50px;background:#fff;border-radius:15px;box-shadow:5px 6px 7px rgba(0,0,0,0.38);overflow:hidden;"></div>
<div style="position:absolute;left:1634.00px;top:282.00px;width:86.00px;height:167.50px;background:#0f9e94;border-radius:15px 0 0 15px;"></div>
<div style="position:absolute;top:291.25px;font-size:23.8px;line-height:23.8px;color:#252525;white-space:nowrap;letter-spacing:-0.486px;left:1697.46px;width:400px;text-align:center;">Receitas Hospedagem</div>
<div style="position:absolute;left:1733.00px;top:327.00px;width:321.00px;height:2.00px;background:#e2e2e2;"></div>
<div style="position:absolute;top:366.13px;font-size:38px;line-height:38px;color:#222;white-space:nowrap;letter-spacing:-1.676px;left:1696.76px;width:400px;text-align:center;">-R$ 304,992</div>
<svg style="position:absolute;left:1650px;top:350px;overflow:visible;" width="54" height="40" viewBox="0 0 54 40"><g fill="none" stroke="#fff" stroke-width="2.9" stroke-linejoin="round">
<path d="M3.5,27.5 A23.5,23.5 0 0 1 50.5,27.5 L38.9,27.5 A11.9,11.9 0 0 0 15.1,27.5 Z"/>
<line x1="14.6" y1="8.1" x2="19.8" y2="15.7"/><line x1="39.4" y1="8.1" x2="34.2" y2="15.7"/>
<path d="M33.4,23 C31,23.3 27,24 24.8,26 A3,3 0 0 0 29.3,30.2 C30.8,28.5 32.5,25.5 33.4,23 Z" stroke-width="2.5"/>
</g></svg>
<div style="position:absolute;left:2096.00px;top:282.00px;width:444.50px;height:165.60px;background:#fff;border-radius:15px;box-shadow:5px 6px 7px rgba(0,0,0,0.38);overflow:hidden;"></div>
<div style="position:absolute;left:2096.00px;top:282.00px;width:87.00px;height:165.60px;background:#0f9e94;border-radius:15px 0 0 15px;"></div>
<div style="position:absolute;top:293.31px;font-size:23.5px;line-height:23.5px;color:#252525;white-space:nowrap;letter-spacing:0.514px;left:2163.16px;width:400px;text-align:center;">Ano Anterior</div>
<div style="position:absolute;left:2192.80px;top:326.50px;width:309.20px;height:2.00px;background:#e2e2e2;"></div>
<div style="position:absolute;top:366.17px;font-size:36.3px;line-height:36.3px;color:#222;white-space:nowrap;letter-spacing:-1.447px;left:2162.18px;width:400px;text-align:center;">R$ 0.000</div>
<div style="position:absolute;left:2407.00px;top:414.70px;width:35.40px;height:7.90px;background:#aaa;border:2px solid #222;"></div>
<div style="position:absolute;top:405.11px;font-size:23.5px;line-height:23.5px;color:#888;white-space:nowrap;letter-spacing:-0.169px;left:2475.70px;">0%</div>
<svg style="position:absolute;left:2112px;top:342px;overflow:visible;" width="54" height="50" viewBox="0 0 54 50"><g fill="none" stroke="#fff" stroke-width="2.9" stroke-linecap="round">
<rect x="3.55" y="7.65" width="46.7" height="38.5" rx="4.5"/>
<line x1="3.55" y1="17.9" x2="50.25" y2="17.9"/>
<line x1="11.4" y1="4.2" x2="11.4" y2="11.4"/><line x1="27" y1="4.2" x2="27" y2="11.4"/><line x1="42.6" y1="4.2" x2="42.6" y2="11.4"/>
<line x1="12.8" y1="25.8" x2="16.0" y2="25.8"/><line x1="25.4" y1="25.8" x2="28.6" y2="25.8"/><line x1="38.0" y1="25.8" x2="41.2" y2="25.8"/><line x1="12.8" y1="31.9" x2="16.0" y2="31.9"/><line x1="25.4" y1="31.9" x2="28.6" y2="31.9"/><line x1="38.0" y1="31.9" x2="41.2" y2="31.9"/><line x1="12.8" y1="38.3" x2="16.0" y2="38.3"/><line x1="25.4" y1="38.3" x2="28.6" y2="38.3"/><line x1="38.0" y1="38.3" x2="41.2" y2="38.3"/></g></svg>
<div style="position:absolute;left:1624.00px;top:469.00px;width:918.00px;height:961.00px;background:#fff;border-radius:15px;box-shadow:4px 5px 9px rgba(0,0,0,0.32);"></div>
<div style="position:absolute;top:476.28px;font-size:23.3px;line-height:23.3px;color:#252525;white-space:nowrap;letter-spacing:0.246px;left:1743.82px;width:700px;text-align:center;">Receitas Hospedagem ao longo do tempo</div>
<div style="position:absolute;left:1645.00px;top:503.50px;width:879.00px;height:2.00px;background:#e4e4e4;"></div>
<svg style="position:absolute;left:1763px;top:633px;overflow:visible;" width="765" height="2" viewBox="0 0 765 2"><line x1="0" y1="1" x2="765" y2="1" stroke="#c6c6c6" stroke-width="2" stroke-dasharray="2 8"/></svg>
<div style="position:absolute;top:624.42px;font-size:21px;line-height:21px;color:#605e5c;white-space:nowrap;letter-spacing:-0.562px;left:1542.04px;width:200px;text-align:right;">R$ 0.0M</div>
<svg style="position:absolute;left:1763px;top:841px;overflow:visible;" width="765" height="2" viewBox="0 0 765 2"><line x1="0" y1="1" x2="765" y2="1" stroke="#c6c6c6" stroke-width="2" stroke-dasharray="2 8"/></svg>
<div style="position:absolute;top:832.42px;font-size:21px;line-height:21px;color:#605e5c;white-space:nowrap;letter-spacing:-0.337px;left:1542.26px;width:200px;text-align:right;">-R$ 0.2M</div>
<svg style="position:absolute;left:1763px;top:1049px;overflow:visible;" width="765" height="2" viewBox="0 0 765 2"><line x1="0" y1="1" x2="765" y2="1" stroke="#c6c6c6" stroke-width="2" stroke-dasharray="2 8"/></svg>
<div style="position:absolute;top:1040.42px;font-size:21px;line-height:21px;color:#605e5c;white-space:nowrap;letter-spacing:-0.337px;left:1542.26px;width:200px;text-align:right;">-R$ 0.4M</div>
<svg style="position:absolute;left:1763px;top:1257px;overflow:visible;" width="765" height="2" viewBox="0 0 765 2"><line x1="0" y1="1" x2="765" y2="1" stroke="#c6c6c6" stroke-width="2" stroke-dasharray="2 8"/></svg>
<div style="position:absolute;top:1248.42px;font-size:21px;line-height:21px;color:#605e5c;white-space:nowrap;letter-spacing:-0.337px;left:1542.26px;width:200px;text-align:right;">-R$ 0.6M</div>
<svg style="position:absolute;left:0px;top:0px;overflow:visible;pointer-events:none;" width="2560" height="1460" viewBox="0 0 2560 1460"><polygon points="1808.6,634 1808.6,1269.6 1921.2,563.4 2034.2,552.4 2146.5,578.1 2259.5,585.1 2371.8,598.7 2484.5,606.8 2484.5,634" fill="#dcdee8"/><line x1="1764" y1="679" x2="2529" y2="679" stroke="rgba(171,171,171,0.49)" stroke-width="6" stroke-dasharray="10 10"/><polyline points="1808.6,1269.6 1921.2,563.4 2034.2,552.4 2146.5,578.1 2259.5,585.1 2371.8,598.7 2484.5,606.8" fill="none" stroke="#a8aac5" stroke-width="4" stroke-linejoin="round"/><circle cx="1808.6" cy="1269.6" r="5" fill="#a8aac5"/><circle cx="1921.2" cy="563.4" r="5" fill="#a8aac5"/><circle cx="2034.2" cy="552.4" r="5" fill="#a8aac5"/><circle cx="2146.5" cy="578.1" r="5" fill="#a8aac5"/><circle cx="2259.5" cy="585.1" r="5" fill="#a8aac5"/><circle cx="2371.8" cy="598.7" r="5" fill="#a8aac5"/><circle cx="2484.5" cy="606.8" r="5" fill="#a8aac5"/></svg>
<div style="position:absolute;top:641.64px;font-size:25px;line-height:25px;color:#b0b0b0;white-space:nowrap;letter-spacing:0.477px;left:1764.00px;">Média</div>
<div style="position:absolute;top:1376.41px;font-size:25.5px;line-height:25.5px;color:#605e5c;white-space:nowrap;letter-spacing:0.342px;left:1708.77px;width:200px;text-align:center;">25-jan</div>
<div style="position:absolute;top:1376.41px;font-size:25.5px;line-height:25.5px;color:#605e5c;white-space:nowrap;letter-spacing:0.425px;left:1821.41px;width:200px;text-align:center;">25-fev</div>
<div style="position:absolute;top:1376.41px;font-size:25.5px;line-height:25.5px;color:#605e5c;white-space:nowrap;letter-spacing:0.684px;left:1934.54px;width:200px;text-align:center;">25-mar</div>
<div style="position:absolute;top:1376.41px;font-size:25.5px;line-height:25.5px;color:#605e5c;white-space:nowrap;letter-spacing:0.616px;left:2046.81px;width:200px;text-align:center;">25-abr</div>
<div style="position:absolute;top:1376.41px;font-size:25.5px;line-height:25.5px;color:#605e5c;white-space:nowrap;letter-spacing:0.609px;left:2159.80px;width:200px;text-align:center;">25-mai</div>
<div style="position:absolute;top:1376.41px;font-size:25.5px;line-height:25.5px;color:#605e5c;white-space:nowrap;letter-spacing:0.762px;left:2272.18px;width:200px;text-align:center;">25-jun</div>
<div style="position:absolute;top:1376.41px;font-size:25.5px;line-height:25.5px;color:#605e5c;white-space:nowrap;letter-spacing:0.805px;left:2384.90px;width:200px;text-align:center;">25-jul</div>
<div style="position:absolute;left:1334.00px;top:53.00px;width:4.00px;height:4.00px;background:#e6e6e6;"></div>
</body></html>
